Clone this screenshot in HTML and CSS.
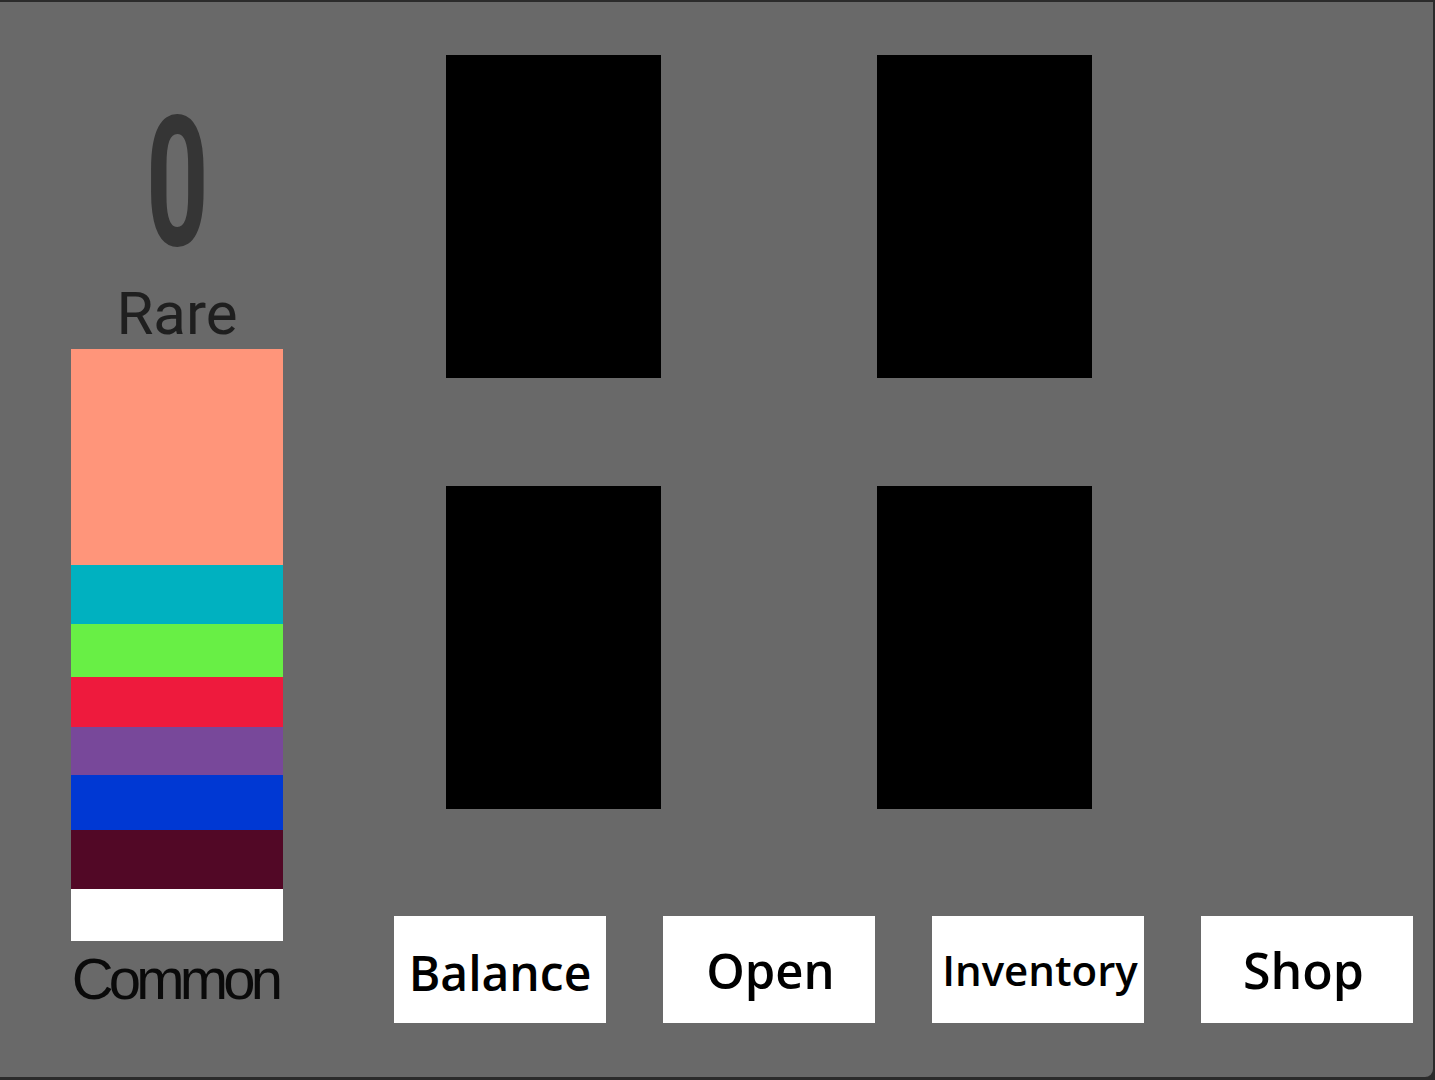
FILE: index.html
```html
<!DOCTYPE html>
<html lang="en">
<head>
<meta charset="utf-8">
<title>Case Opener</title>
<link rel="stylesheet" href="styles.css">
</head>
<body>
<div class="panel">
  <aside class="side">
    <div class="count"><span class="count-digit">0</span></div>
    <div class="label label-rare">Rare</div>
    <div class="bar">
      <div class="seg seg-salmon"></div>
      <div class="seg seg-teal"></div>
      <div class="seg seg-green"></div>
      <div class="seg seg-red"></div>
      <div class="seg seg-purple"></div>
      <div class="seg seg-blue"></div>
      <div class="seg seg-maroon"></div>
      <div class="seg seg-white"></div>
    </div>
    <div class="label label-common">Common</div>
  </aside>
  <main class="main">
    <div class="cards">
      <div class="card"></div>
      <div class="card"></div>
      <div class="card"></div>
      <div class="card"></div>
    </div>
    <div class="buttons">
      <button class="btn btn-balance">Balance</button>
      <button class="btn btn-open">Open</button>
      <button class="btn btn-inventory">Inventory</button>
      <button class="btn btn-shop">Shop</button>
    </div>
  </main>
</div>
</body>
</html>
```
FILE: styles.css
```css
html, body {
  margin: 0;
  padding: 0;
}
body {
  width: 1435px;
  height: 1080px;
  background: #2b2b2b;
  overflow: hidden;
}
.panel {
  box-sizing: border-box;
  margin-top: 2px;
  width: 1433px;
  height: 1075px;
  background: #696969;
  border-bottom-right-radius: 8px;
  display: flex;
}
.side {
  margin-left: 71px;
  width: 212px;
  padding-top: 90px;
  display: flex;
  flex-direction: column;
  align-items: center;
}
.count {
  height: 182px;
  display: flex;
  justify-content: center;
}
.count-digit {
  font-family: Roboto, "DejaVu Sans", sans-serif;
  font-weight: 700;
  font-size: 182px;
  line-height: 182px;
  color: #353535;
  display: inline-block;
  transform: scaleX(0.6);
}
.label {
  white-space: nowrap;
}
.label-rare {
  margin-top: 10px;
  font-family: Roboto, "DejaVu Sans", sans-serif;
  font-size: 60px;
  line-height: 60px;
  color: #1f1f1f;
}
.bar {
  margin-top: 5px;
  width: 212px;
  display: flex;
  flex-direction: column;
}
.seg-salmon { height: 216px; background: #ff957a; }
.seg-teal { height: 59px; background: #00b1c0; }
.seg-green { height: 53px; background: #68ef45; }
.seg-red { height: 50px; background: #ee1a3d; }
.seg-purple { height: 48px; background: #78489a; }
.seg-blue { height: 55px; background: #0038d3; }
.seg-maroon { height: 59px; background: #520826; }
.seg-white { height: 52px; background: #ffffff; }
.label-common {
  margin-top: 9px;
  font-family: "Liberation Sans", Arial, sans-serif;
  font-size: 58px;
  line-height: 58px;
  letter-spacing: -4.8px;
  color: #0a0a0a;
  margin-left: -4px;
}
.main {
  margin-left: 111px;
  display: flex;
  flex-direction: column;
}
.cards {
  margin-left: 52px;
  padding-top: 53px;
  display: grid;
  grid-template-columns: 215px 215px;
  grid-auto-rows: 323px;
  column-gap: 216px;
  row-gap: 108px;
}
.card {
  background: #000;
}
.buttons {
  margin-top: 107px;
  display: flex;
  gap: 57px;
}
.btn {
  width: 212px;
  height: 107px;
  padding: 0;
  border: none;
  background: #fff;
  color: #000;
  font-family: "Open Sans", "Noto Sans", sans-serif;
  font-weight: 600;
  display: flex;
  align-items: center;
  justify-content: center;
  white-space: nowrap;
}
.btn-balance { font-size: 48px; padding-top: 6px; }
.btn-open { font-size: 49px; padding-left: 3px; }
.btn-inventory { font-size: 42px; padding-left: 4px; }
.btn-shop { font-size: 50px; padding-right: 7px; }
```
